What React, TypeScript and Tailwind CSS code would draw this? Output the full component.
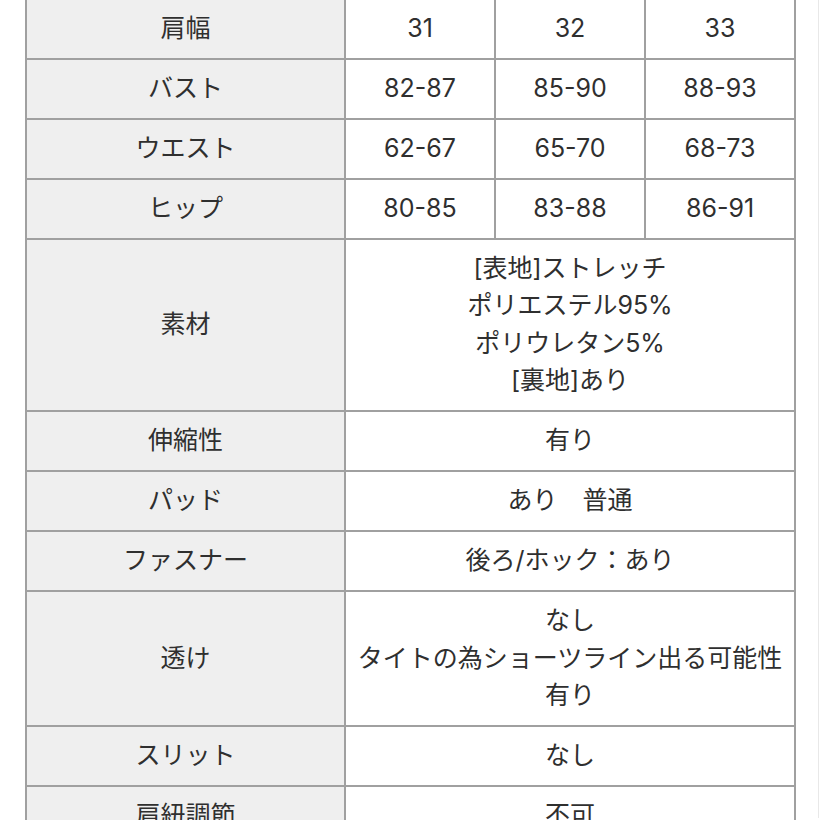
const font = { fontFamily: 'Inter, "Noto Sans CJK JP", sans-serif' };

const sizeRows: { label: string; values: string[] }[] = [
  { label: "肩幅", values: ["31", "32", "33"] },
  { label: "バスト", values: ["82-87", "85-90", "88-93"] },
  { label: "ウエスト", values: ["62-67", "65-70", "68-73"] },
  { label: "ヒップ", values: ["80-85", "83-88", "86-91"] },
];

const detailRows: { label: string; lines: string[] }[] = [
  {
    label: "素材",
    lines: ["[表地]ストレッチ", "ポリエステル95%", "ポリウレタン5%", "[裏地]あり"],
  },
  { label: "伸縮性", lines: ["有り"] },
  { label: "パッド", lines: ["あり　普通"] },
  { label: "ファスナー", lines: ["後ろ/ホック：あり"] },
  {
    label: "透け",
    lines: ["なし", "タイトの為ショーツライン出る可能性", "有り"],
  },
  { label: "スリット", lines: ["なし"] },
  { label: "肩紐調節", lines: ["不可"] },
];

const th =
  "border-2 border-[#a0a0a0] bg-[#efefef] py-[10.25px] text-center font-normal align-middle";
const td = "border-2 border-[#a0a0a0] bg-white py-[10.25px] text-center align-middle";

export default function App() {
  return (
    <div
      className="w-[820px] h-[820px] overflow-hidden bg-white text-[#2f2f2f] text-[25px] leading-[37.5px]"
      style={font}
    >
      <div className="w-[819px] h-full border-r border-[#e8e8e8] pl-[25px]">
        <table className="-mt-[2.5px] w-[769px] table-fixed border-collapse">
          <colgroup>
            <col className="w-[319px]" />
            <col className="w-[150px]" />
            <col className="w-[150px]" />
            <col className="w-[150px]" />
          </colgroup>
          <tbody>
            {sizeRows.map((r) => (
              <tr key={r.label}>
                <th className={th}>{r.label}</th>
                {r.values.map((v, i) => (
                  <td key={i} className={td}>
                    {v}
                  </td>
                ))}
              </tr>
            ))}
            {detailRows.map((r) => (
              <tr key={r.label}>
                <th className={th}>{r.label}</th>
                <td colSpan={3} className={td}>
                  {r.lines.map((l, i) => (
                    <div key={i} className="whitespace-nowrap">
                      {l}
                    </div>
                  ))}
                </td>
              </tr>
            ))}
          </tbody>
        </table>
      </div>
    </div>
  );
}
